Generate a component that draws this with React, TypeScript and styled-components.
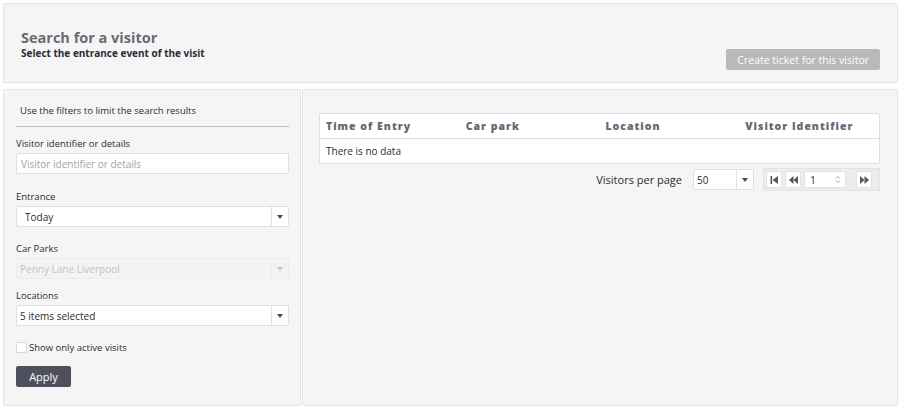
import React from "react";
import styled, { createGlobalStyle } from "styled-components";

const GlobalStyle = createGlobalStyle`
  html, body {
    margin: 0;
    padding: 0;
    background: #ffffff;
    font-family: "Open Sans", "Noto Sans", sans-serif;
    color: #2d2d35;
  }
  * { box-sizing: border-box; }
`;

const Page = styled.div`
  width: 904px;
  height: 412px;
  padding: 3px 6px 6px 3px;
  display: flex;
  flex-direction: column;
  gap: 6px;
`;

const Panel = styled.section`
  background: #f5f5f5;
  border: 1px solid #e4e4e4;
  border-radius: 2px;
`;

const Header = styled(Panel)`
  height: 80px;
  display: flex;
  align-items: flex-end;
  justify-content: space-between;
  padding: 0 17px 12px 17px;
`;

const TitleBlock = styled.div`
  padding-bottom: 10px;
`;

const Title = styled.h1`
  margin: 0;
  font-size: 14.5px;
  font-weight: 700;
  color: #6a6a76;
  line-height: 17px;
`;

const Subtitle = styled.p`
  margin: 0;
  font-size: 10px;
  font-weight: 700;
  color: #2b2b33;
  line-height: 14px;
`;

const Button = styled.button<{ $disabled?: boolean }>`
  font-family: inherit;
  border: none;
  border-radius: 2px;
  color: #ffffff;
  font-size: 10.5px;
  height: 21px;
  padding: 0 11px;
  background: ${(p) => (p.$disabled ? "#b9b9bc" : "#4f505e")};
  cursor: pointer;
`;

const Body = styled.div`
  flex: 1;
  display: flex;
  gap: 1px;
`;

const Filters = styled(Panel)`
  width: 298px;
  padding: 14px 11px 0 8px;
  display: flex;
  flex-direction: column;
`;

const Intro = styled.div`
  font-size: 9.5px;
  color: #2b2b33;
  line-height: 13px;
  padding: 0 0 9px 4px;
  border-bottom: 1px solid #bdbdbd;
  margin: 0 0 0 4px;
`;

const Field = styled.div<{ $gap?: number }>`
  display: flex;
  flex-direction: column;
  padding-left: 4px;
  margin-top: ${(p) => p.$gap ?? 10}px;
`;

const Label = styled.label`
  font-size: 9.5px;
  color: #2b2b33;
  margin-bottom: 3px;
  line-height: 12px;
`;

const TextInput = styled.div`
  height: 21px;
  border: 1px solid #e0e0e0;
  border-radius: 2px;
  background: #ffffff;
  font-size: 10px;
  color: #a3a3aa;
  padding: 0 4px;
  display: flex;
  align-items: center;
`;

const Select = styled.div<{ $disabled?: boolean }>`
  height: 21px;
  border: 1px solid ${(p) => (p.$disabled ? "#ececec" : "#e0e0e0")};
  border-radius: 2px;
  background: ${(p) => (p.$disabled ? "#f3f3f3" : "#ffffff")};
  display: flex;
  align-items: center;
  font-size: 10px;
  color: ${(p) => (p.$disabled ? "#c2c2c6" : "#2b2b33")};
`;

const SelectValue = styled.span<{ $indent?: boolean }>`
  flex: 1;
  padding-left: ${(p) => (p.$indent ? "8px" : "3px")};
`;

const Caret = styled.span<{ $disabled?: boolean }>`
  width: 17px;
  align-self: stretch;
  border-left: 1px solid ${(p) => (p.$disabled ? "#ececec" : "#e0e0e0")};
  display: flex;
  align-items: center;
  justify-content: center;
  &::after {
    content: "";
    border-left: 3.5px solid transparent;
    border-right: 3.5px solid transparent;
    border-top: 4px solid ${(p) => (p.$disabled ? "#c6c6c6" : "#4a4a4a")};
  }
`;

const CheckRow = styled.label`
  display: flex;
  align-items: center;
  gap: 2px;
  font-size: 9.5px;
  color: #2b2b33;
  margin: 15px 0 0 4px;
`;

const Box = styled.span`
  width: 11px;
  height: 11px;
  border: 1px solid #d8d8d8;
  background: #ffffff;
  border-radius: 1px;
`;

const ApplyRow = styled.div`
  margin: 10px 0 0 4px;
  ${Button} {
    width: 55px;
    font-size: 11px;
    padding: 0;
  }
`;

const Results = styled(Panel)`
  flex: 1;
  padding: 23px 17px 0 16px;
`;

const Table = styled.table`
  width: 100%;
  border-collapse: separate;
  border-spacing: 0;
  background: #ffffff;
  border: 1px solid #dedee2;
  border-radius: 2px;
`;

const Th = styled.th`
  text-align: left;
  font-size: 10.5px;
  font-weight: 800;
  letter-spacing: 1px;
  color: #666673;
  height: 25px;
  padding: 0 6px;
  border-bottom: 1px solid #dedee2;
  width: 25%;
`;

const Td = styled.td`
  font-size: 10px;
  color: #2b2b33;
  height: 24px;
  padding: 0 6px;
`;

const Pagination = styled.div`
  display: flex;
  align-items: center;
  justify-content: flex-end;
  margin-top: 4px;
`;

const PerPageLabel = styled.span`
  font-size: 11px;
  color: #2b2b33;
  margin-right: 11px;
`;

const PerPage = styled(Select)`
  width: 61px;
  margin-right: 9px;
`;

const Pager = styled.div`
  background: #ececec;
  border: 1px solid #e4e4e4;
  padding: 2px;
  display: flex;
  gap: 3px;
  width: 117px;
`;

const PagerButton = styled.span`
  width: 16px;
  height: 17px;
  background: #ffffff;
  border: 1px solid #e2e2e2;
  border-radius: 2px;
  display: flex;
  align-items: center;
  justify-content: center;
`;

const PageInput = styled.span`
  width: 42px;
  height: 17px;
  background: #ffffff;
  border: 1px solid #e2e2e2;
  border-radius: 2px;
  font-size: 10.5px;
  display: flex;
  align-items: center;
  justify-content: space-between;
  padding: 0 4px 0 5px;
  margin-right: 7px;
`;

const icon = "#555560";

const FirstIcon = () => (
  <svg width="9" height="8" viewBox="0 0 9 8">
    <rect x="0.5" y="0" width="1.6" height="8" fill={icon} />
    <polygon points="8,0 2.5,4 8,8" fill={icon} />
  </svg>
);

const PrevIcon = () => (
  <svg width="9" height="8" viewBox="0 0 9 8">
    <polygon points="4.5,0 0,4 4.5,8" fill={icon} />
    <polygon points="9,0 4.5,4 9,8" fill={icon} />
  </svg>
);

const NextIcon = () => (
  <svg width="9" height="8" viewBox="0 0 9 8">
    <polygon points="0,0 4.5,4 0,8" fill={icon} />
    <polygon points="4.5,0 9,4 4.5,8" fill={icon} />
  </svg>
);

const Spinner = () => (
  <svg width="6" height="9" viewBox="0 0 6 9">
    <path d="M1 3.5 L3 1.5 L5 3.5 M1 5.5 L3 7.5 L5 5.5" stroke="#8a8a90" strokeWidth="0.8" fill="none" />
  </svg>
);

const columns = ["Time of Entry", "Car park", "Location", "Visitor Identifier"];

export default function App() {
  return (
    <>
      <GlobalStyle />
      <Page>
        <Header>
          <TitleBlock>
            <Title>Search for a visitor</Title>
            <Subtitle>Select the entrance event of the visit</Subtitle>
          </TitleBlock>
          <Button $disabled>Create ticket for this visitor</Button>
        </Header>
        <Body>
          <Filters>
            <Intro>Use the filters to limit the search results</Intro>
            <Field $gap={11}>
              <Label>Visitor identifier or details</Label>
              <TextInput>Visitor identifier or details</TextInput>
            </Field>
            <Field $gap={17}>
              <Label>Entrance</Label>
              <Select>
                <SelectValue $indent>Today</SelectValue>
                <Caret />
              </Select>
            </Field>
            <Field $gap={16}>
              <Label>Car Parks</Label>
              <Select $disabled>
                <SelectValue>Penny Lane Liverpool</SelectValue>
                <Caret $disabled />
              </Select>
            </Field>
            <Field $gap={11}>
              <Label>Locations</Label>
              <Select>
                <SelectValue>5 items selected</SelectValue>
                <Caret />
              </Select>
            </Field>
            <CheckRow>
              <Box />
              Show only active visits
            </CheckRow>
            <ApplyRow>
              <Button>Apply</Button>
            </ApplyRow>
          </Filters>
          <Results>
            <Table>
              <thead>
                <tr>
                  {columns.map((c) => (
                    <Th key={c}>{c}</Th>
                  ))}
                </tr>
              </thead>
              <tbody>
                <tr>
                  <Td colSpan={4}>There is no data</Td>
                </tr>
              </tbody>
            </Table>
            <Pagination>
              <PerPageLabel>Visitors per page</PerPageLabel>
              <PerPage>
                <SelectValue>50</SelectValue>
                <Caret />
              </PerPage>
              <Pager>
                <PagerButton>
                  <FirstIcon />
                </PagerButton>
                <PagerButton>
                  <PrevIcon />
                </PagerButton>
                <PageInput>
                  1
                  <Spinner />
                </PageInput>
                <PagerButton>
                  <NextIcon />
                </PagerButton>
              </Pager>
            </Pagination>
          </Results>
        </Body>
      </Page>
    </>
  );
}
